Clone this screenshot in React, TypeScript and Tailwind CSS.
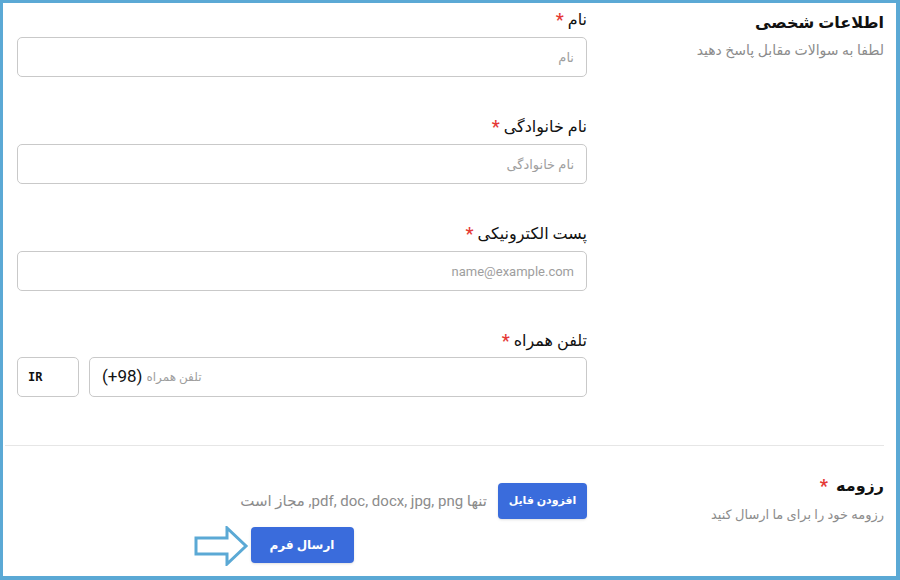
const Star = () => <span className="mr-1 text-[18px] leading-none text-[#e53935]">*</span>;

const Field = ({ label, placeholder }: { label: string; placeholder: string }) => (
  <div className="mb-[40px]">
    <label className="mb-[7px] flex h-[20px] items-center text-[16px] font-medium text-[#111]">
      {label}
      <Star />
    </label>
    <input
      placeholder={placeholder}
      className="h-[40px] w-full rounded-[5px] border border-[#c9c9c9] px-3 text-[13px] outline-none placeholder:text-[#9e9e9e]"
    />
  </div>
);

const App = () => {
  return (
    <div
      dir="rtl"
      className="h-[580px] w-[900px] overflow-hidden border-[3px] border-r-[4px] border-b-[4px] border-[#5ba9d5] bg-white font-['Roboto','DejaVu_Sans',sans-serif] text-[#111]"
    >
      {/* PERSONAL INFO */}
      <div className="flex pl-[14px] pr-[12px] pt-[7px]">
        <div className="flex-1">
          <h2 className="flex h-[26px] items-center text-[16px] font-bold">اطلاعات شخصی</h2>
          <p className="mt-[4px] text-[14px] text-[#8c8c8c]">لطفا به سوالات مقابل پاسخ دهید</p>
        </div>

        <div className="w-[570px]">
          <Field label="نام" placeholder="نام" />
          <Field label="نام خانوادگی" placeholder="نام خانوادگی" />
          <Field label="پست الکترونیکی" placeholder="name@example.com" />

          {/* PHONE */}
          <div>
            <label className="mb-[6px] flex h-[20px] items-center text-[16px] font-medium">
              تلفن همراه
              <Star />
            </label>
            <div className="flex gap-[10px]">
              <div dir="ltr" className="flex h-[40px] flex-1 items-center rounded-[5px] border border-[#c9c9c9] px-3">
                <span className="text-[17px] text-[#111]">(+98)</span>
                <input
                  dir="rtl"
                  placeholder="تلفن همراه"
                  className="ml-1 flex-1 text-left text-[12px] outline-none placeholder:text-[#9e9e9e]"
                />
              </div>
              <div dir="ltr" className="flex h-[40px] w-[62px] items-center rounded-[5px] border border-[#c9c9c9] px-[10px] font-['DejaVu_Sans_Mono',monospace] text-[12px] font-bold">
                IR
              </div>
            </div>
          </div>
        </div>
      </div>

      {/* DIVIDER */}
      <div className="ml-[2px] mr-[12px] mt-[48px] border-t border-[#e6e6e6]" />

      {/* RESUME */}
      <div className="flex pl-[14px] pr-[12px] pt-[29px]">
        <div className="flex-1">
          <h2 className="flex h-[22px] items-center text-[16px] font-bold">
            رزومه
            <span className="mr-2 text-[18px] leading-none text-[#e53935]">*</span>
          </h2>
          <p className="mt-[8px] text-[13px] text-[#8c8c8c]">رزومه خود را برای ما ارسال کنید</p>
        </div>

        <div className="w-[570px] pt-[8px]">
          <div className="flex items-center gap-[11px]">
            <button className="h-[36px] w-[89px] rounded-[4px] bg-[#3a6cdc] text-[11px] font-bold text-white shadow-sm">
              افزودن فایل
            </button>
            <span className="text-[15px] text-[#8c8c8c]">
              تنها <span dir="ltr">pdf, doc, docx, jpg, png</span>, مجاز است
            </span>
          </div>

          <div className="mt-[8px] flex justify-center">
            <div className="relative">
              <button className="h-[36px] w-[103px] rounded-[4px] bg-[#3a6cdc] text-[12px] font-bold text-white shadow-sm">
                ارسال فرم
              </button>
              <svg
                width="56"
                height="40"
                viewBox="0 0 56 40"
                className="absolute left-[-57px] top-[-1px]"
              >
                <polygon
                  points="2,12 33,12 33,2 52,20 33,38 33,28 2,28"
                  fill="white"
                  stroke="#5ba9d5"
                  strokeWidth="3"
                  strokeLinejoin="miter"
                />
              </svg>
            </div>
          </div>
        </div>
      </div>
    </div>
  );
};

export default App;
